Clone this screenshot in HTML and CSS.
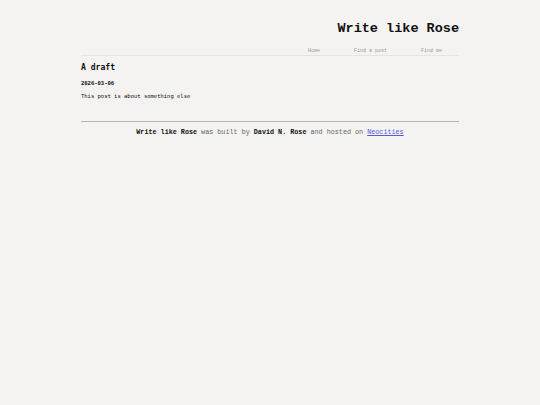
FILE: index.html
```html
<!DOCTYPE html>
<html>
<head>
<meta charset="utf-8">
<link rel="stylesheet" href="styles.css">
</head>
<body>
<div class="page">
  <header class="site-header">
    <h1 class="site-title">Write like Rose</h1>
    <nav class="site-nav">
      <ul class="nav-list">
        <li class="nav-item">Home</li>
        <li class="nav-item">Find a post</li>
        <li class="nav-item">Find me</li>
      </ul>
    </nav>
  </header>
  <main class="post">
    <h2 class="post-title">A draft</h2>
    <p class="post-date">2026-03-06</p>
    <p class="post-body">This post is about something else</p>
  </main>
  <footer class="site-footer">
    <p class="footer-text"><b>Write like Rose</b> was built by <b>David N. Rose</b> and hosted on <a class="footer-link" href="#">Neocities</a></p>
  </footer>
</div>
</body>
</html>
```
FILE: styles.css
```css
html, body {
  margin: 0;
  padding: 0;
  background: #f4f3f1;
}
.page {
  width: 378px;
  margin: 0 auto;
}
.site-header {
  padding-top: 21px;
}
.site-title {
  margin: 0;
  text-align: right;
  font-family: "Liberation Mono", monospace;
  font-weight: bold;
  font-size: 13.5px;
  line-height: 16px;
  color: #111;
}
.site-nav {
  margin-top: 11px;
  border-bottom: 1px solid #e4e4e2;
}
.nav-list {
  list-style: none;
  margin: 0;
  padding: 0 0 1px 0;
  display: flex;
  justify-content: flex-end;
}
.nav-item {
  padding: 0 17px;
  font-family: "Liberation Mono", monospace;
  font-size: 5px;
  line-height: 6px;
  color: #999;
}
.post {
  padding-top: 5px;
  padding-bottom: 21px;
}
.post-title {
  margin: 0;
  font-family: "DejaVu Sans Mono", monospace;
  font-size: 8.1px;
  line-height: 12px;
  font-weight: bold;
  color: #111;
}
.post-date {
  margin: 6px 0 0 0;
  font-family: "DejaVu Sans Mono", monospace;
  font-size: 5.5px;
  line-height: 8px;
  font-weight: bold;
  color: #111;
}
.post-body {
  margin: 5px 0 0 0;
  font-family: "DejaVu Sans Mono", monospace;
  font-size: 5.5px;
  line-height: 8px;
  color: #111;
}
.site-footer {
  border-top: 1px solid #b4b4b2;
}
.footer-text {
  margin: 6px 0 0 0;
  text-align: center;
  font-family: "Liberation Mono", monospace;
  font-size: 6.75px;
  line-height: 9px;
  color: #666;
}
.footer-text b {
  color: #111;
}
.footer-link {
  color: #5a5ad6;
}
```
